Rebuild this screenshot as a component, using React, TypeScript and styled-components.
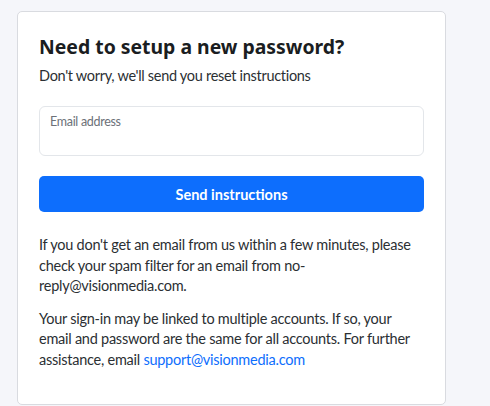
import styled, {createGlobalStyle} from 'styled-components'

const GlobalStyle = createGlobalStyle`
  html, body {
    margin: 0;
    padding: 0;
    background: #f5f6fa;
  }
  body {
    font-family: Lato, "Noto Sans", sans-serif;
    color: #212529;
  }
`

function App() {
  return (
    <Page>
      <GlobalStyle />
      <Card>
        <Title>Need to setup a new password?</Title>
        <Subtitle>Don't worry, we'll send you reset instructions</Subtitle>
        <Field>
          <FieldLabel htmlFor="email">Email address</FieldLabel>
          <FieldInput id="email" type="email" />
        </Field>
        <SubmitButton type="button">Send instructions</SubmitButton>
        <Note>
          If you don't get an email from us within a few minutes, please
          check your spam filter for an email from no-reply@visionmedia.com.
        </Note>
        <Note>
          Your sign-in may be linked to multiple accounts. If so, your email
          and password are the same for all accounts. For further assistance,
          email <SupportLink href="#">support@visionmedia.com</SupportLink>
        </Note>
      </Card>
    </Page>
  )
}

const Page = styled.div`
  padding: 11px 0 0 17px;
  height: 406px;
  box-sizing: border-box;
  overflow: hidden;
`

const Card = styled.div`
  width: 429px;
  height: 394px;
  box-sizing: border-box;
  background: #fff;
  border: 1px solid #d9dbe0;
  border-radius: 5px;
  padding: 22px 21px 20px 21px;
`

const Title = styled.h1`
  margin: 0;
  font-family: "Noto Sans", sans-serif;
  font-size: 19.4px;
  font-weight: 700;
  line-height: 26px;
  color: #1a1d21;
`

const Subtitle = styled.p`
  margin: 6px 0 0;
  font-size: 14.5px;
  letter-spacing: -0.3px;
  line-height: 20px;
  color: #2b2f33;
`

const Field = styled.div`
  position: relative;
  margin-top: 20px;
`

const FieldLabel = styled.label`
  position: absolute;
  left: 11px;
  top: 8px;
  font-size: 12.5px;
  letter-spacing: -0.3px;
  color: #6c7178;
`

const FieldInput = styled.input`
  display: block;
  width: 100%;
  height: 50px;
  box-sizing: border-box;
  border: 1px solid #e3e6ea;
  border-radius: 6px;
  padding: 24px 11px 6px;
  font-family: inherit;
  font-size: 14px;
  outline: none;
`

const SubmitButton = styled.button`
  display: block;
  width: 100%;
  height: 36px;
  margin-top: 20px;
  border: none;
  border-radius: 5px;
  background: #0d6efd;
  color: #fff;
  font-family: inherit;
  font-size: 14.5px;
  font-weight: 700;
  cursor: pointer;
`

const Note = styled.p`
  margin: 23px 0 0;
  font-size: 14.5px;
  letter-spacing: -0.25px;
  line-height: 20.5px;
  color: #2b2f33;

  & + & {
    margin-top: 12px;
  }
`

const SupportLink = styled.a`
  color: #0d6efd;
  text-decoration: none;
`

export default App
